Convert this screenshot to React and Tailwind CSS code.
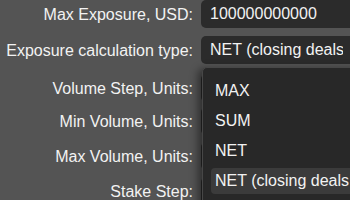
const rows = [
  { label: "Max Exposure, USD:", value: "100000000000", mt: "mt-0" },
  { label: "Exposure calculation type:", value: "NET (closing deals first)", mt: "mt-[8px]", clip: true },
  { label: "Volume Step, Units:", value: "", mt: "mt-[10px]" },
  { label: "Min Volume, Units:", value: "", mt: "mt-[5px]" },
  { label: "Max Volume, Units:", value: "", mt: "mt-[7px]" },
  { label: "Stake Step:", value: "", mt: "mt-[7px]" },
];

const options = ["MAX", "SUM", "NET", "NET (closing deals first)"];

export default function App() {
  return (
    <div
      className="relative w-[350px] h-[200px] overflow-hidden bg-[#545454] text-[16px] text-[#f2f2f2]"
      style={{ fontFamily: '"Liberation Sans", Arial, sans-serif' }}
    >
      {/* Form rows */}
      <div className="flex flex-col">
        {rows.map((row) => (
          <div key={row.label} className={`flex items-center gap-2 h-[28px] ${row.mt}`}>
            <div className="w-[193px] shrink-0 text-right whitespace-nowrap leading-none pt-[2px]">
              {row.label}
            </div>
            <div className="flex-1 h-full min-w-[160px] rounded-[5px] bg-[#2b2b2b] pl-[9px] flex items-center whitespace-nowrap overflow-hidden leading-none">
              {row.clip ? (
                <span className="block w-[133px] overflow-hidden">{row.value}</span>
              ) : (
                row.value
              )}
            </div>
          </div>
        ))}
      </div>

      {/* Open select dropdown */}
      <div className="absolute left-[202px] top-[67px] w-[170px] h-[150px] rounded-[5px] bg-[#282828] border border-[#474747] shadow-[-4px_2px_8px_rgba(0,0,0,0.45)] pt-[10px] px-[8px]">
        <div className="flex flex-col gap-[4px]">
          {options.map((opt, i) => (
            <div
              key={opt}
              className={`h-[26px] flex items-center pl-[4px] rounded-[4px] whitespace-nowrap leading-none ${
                i === 3 ? "bg-[#3b3b3b]" : ""
              }`}
            >
              {opt}
            </div>
          ))}
        </div>
      </div>
    </div>
  );
}
